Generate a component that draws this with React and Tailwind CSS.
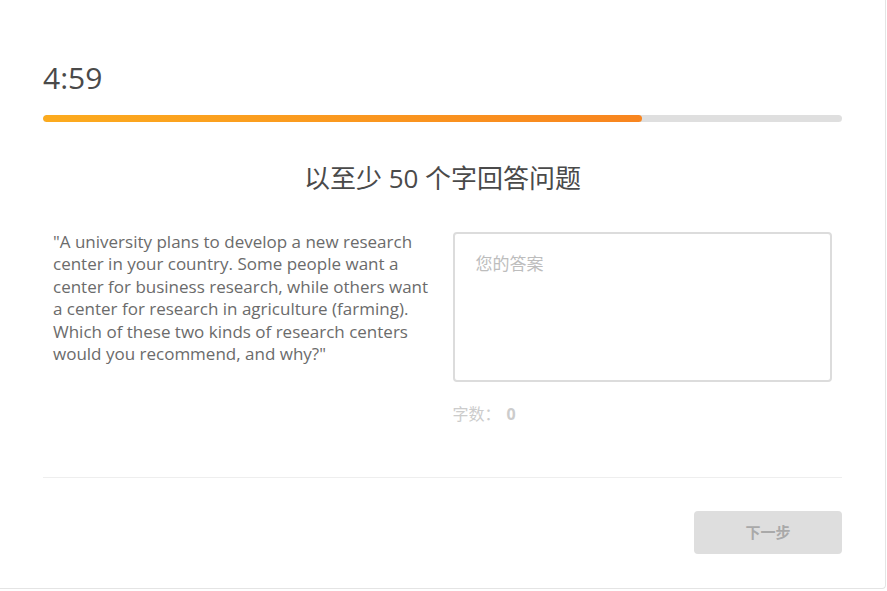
import React from 'react';

const font = { fontFamily: '"Open Sans", "Noto Sans CJK SC", sans-serif' };

export default function App() {
  return (
    <div className="w-[887px] h-[591px] bg-white overflow-hidden" style={font}>
      <div className="w-[886px] h-[589px] border-r border-b border-[#e4e4e4] rounded-br-[4px] px-[43px] pt-[58px]">
        <div className="text-[30px] leading-[40px] text-[#4a4a4a]">4:59</div>
        <div className="mt-[17px] h-[7px] w-full rounded-full bg-[#dfdfdf] overflow-hidden">
          <div className="h-full w-[75%] rounded-full bg-gradient-to-r from-[#fcab1e] to-[#f8851f]" />
        </div>
        <h1 className="mt-[39px] text-center text-[26px] leading-[34px] text-[#4a4a4a]">以至少 50 个字回答问题</h1>
        <div className="mt-[37px] grid grid-cols-2">
          <p className="px-[10px] text-[17px] leading-[22.4px] text-[#6b6b6b] -mt-[1px]">
            "A university plans to develop a new research center in your country. Some people want a center for business research, while others want a center for research in agriculture (farming). Which of these two kinds of research centers would you recommend, and why?"
          </p>
          <div className="px-[10px]">
            <textarea
              placeholder="您的答案"
              className="block w-full h-[150px] resize-none rounded-[4px] border-2 border-[#dcdcdc] px-[21px] py-[18px] text-[17px] leading-[24px] text-[#4a4a4a] placeholder:text-[#bdbdbd] outline-none"
            />
            <div className="mt-[20px] text-[16px] leading-[24px] text-[#cccccc]">
              字数：<span className="ml-[6px] font-bold">0</span>
            </div>
          </div>
        </div>
        <div className="mt-[51px] h-px bg-[#eeeeee]" />
        <div className="mt-[33px] flex justify-end">
          <button className="w-[148px] h-[43px] rounded-[4px] bg-[#dedede] text-[15px] font-bold text-[#a9a9a9]">下一步</button>
        </div>
      </div>
    </div>
  );
}
